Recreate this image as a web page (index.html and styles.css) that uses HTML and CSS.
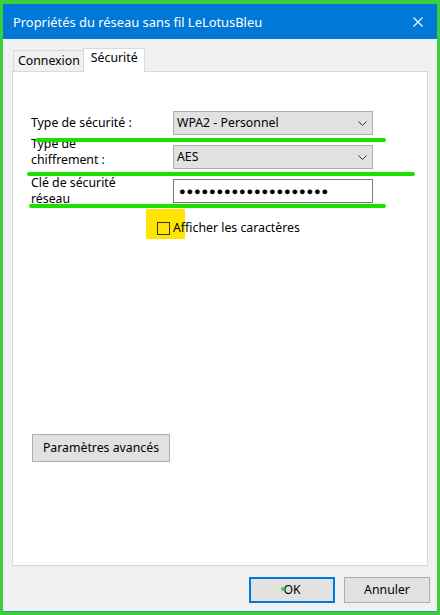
FILE: index.html
```html
<!DOCTYPE html>
<html lang="fr">
<head>
<meta charset="utf-8">
<title>Propriétés du réseau sans fil</title>
<link rel="stylesheet" href="styles.css">
</head>
<body>
<div class="window">
  <div class="titlebar">
    <span class="title">Propriétés du réseau sans fil LeLotusBleu</span>
    <svg class="close" width="10" height="10" viewBox="0 0 10 10"><path d="M0.5 0.5L9.5 9.5M9.5 0.5L0.5 9.5" stroke="#fff" stroke-width="1.1" fill="none"/></svg>
  </div>
  <div class="content">
    <div class="tabs">
      <div class="tab">Connexion</div>
      <div class="tab active">Sécurité</div>
    </div>
    <div class="panel">
      <div class="form">
        <div class="label l1">Type de sécurité :</div>
        <div class="select"><span>WPA2 - Personnel</span><svg width="9" height="5" viewBox="0 0 9 5"><polyline points="0.5,0.5 4.5,4.5 8.5,0.5" fill="none" stroke="#333" stroke-width="1"/></svg></div>
        <div class="label l2">Type de<br>chiffrement :</div>
        <div class="select"><span>AES</span><svg width="9" height="5" viewBox="0 0 9 5"><polyline points="0.5,0.5 4.5,4.5 8.5,0.5" fill="none" stroke="#333" stroke-width="1"/></svg></div>
        <div class="label l3">Clé de sécurité<br>réseau</div>
        <div class="input"><span class="dots">●●●●●●●●●●●●●●●●●●●●</span></div>
      </div>
      <span class="highlight"></span>
      <div class="check-row"><span class="box"></span><span>Afficher les caractères</span></div>
      <button class="btn adv">Paramètres avancés</button>
      <span class="stroke s1"></span>
      <span class="stroke s2"></span>
      <span class="stroke s3"></span>
    </div>
    <div class="actions">
      <button class="btn ok">OK<span class="dot"></span></button>
      <button class="btn cancel">Annuler</button>
    </div>
  </div>
</div>
</body>
</html>
```

FILE: styles.css
```css
html, body {
  margin: 0;
  padding: 0;
}
body {
  font-family: "Noto Sans", "Open Sans", sans-serif;
  font-size: 12.3px;
  line-height: 16px;
  color: #000;
  background: #3ccf3c;
}
.window {
  width: 440px;
  height: 615px;
  box-sizing: border-box;
  border: 3px solid #3ccf3c;
  border-top-width: 4px;
  display: flex;
  flex-direction: column;
}
.titlebar {
  height: 35px;
  flex: none;
  background: #0078d7;
  color: #fff;
  display: flex;
  align-items: center;
  justify-content: space-between;
  padding: 0 14px 0 10px;
}
.title {
  font-size: 12.9px;
}
.close {
  display: block;
}
.content {
  flex: 1;
  background: #f0f0f0;
  border-bottom: 1px solid #1aa39a;
  display: flex;
  flex-direction: column;
  padding: 9px 9px 0 9px;
}
.tabs {
  display: flex;
  align-items: flex-end;
  padding-left: 1px;
}
.tab {
  box-sizing: border-box;
  height: 21px;
  border: 1px solid #d9d9d9;
  border-bottom: none;
  background: #f0f0f0;
  padding: 2px 3px 0 4px;
}
.tab.active {
  height: 24px;
  background: #fff;
  margin-left: -1px;
  margin-bottom: -1px;
  padding: 1px 6px 0 7px;
  position: relative;
  z-index: 1;
}
.panel {
  position: relative;
  box-sizing: border-box;
  height: 495px;
  background: #fff;
  border: 1px solid #d9d9d9;
  padding: 39px 0 0 18px;
  display: flex;
  flex-direction: column;
  align-items: flex-start;
}
.form {
  display: grid;
  grid-template-columns: 142px 200px;
  grid-auto-rows: 24px;
  row-gap: 10px;
}
.label {
  align-self: start;
}
.l1 { margin-top: 4px; }
.l2 { margin-top: -9px; }
.l3 { margin-top: -4px; }
.select {
  box-sizing: border-box;
  background: #e1e1e1;
  border: 1px solid #adadad;
  display: flex;
  align-items: center;
  justify-content: space-between;
  padding: 0 5px 0 3px;
}
.select svg {
  display: block;
}
.input {
  box-sizing: border-box;
  background: #fff;
  border: 1px solid #7a7a7a;
  display: flex;
  align-items: center;
  padding: 0 0 0 5px;
}
.dots {
  font-family: "Liberation Sans", sans-serif;
  font-size: 11px;
  letter-spacing: 0.86px;
  line-height: 12px;
}
.check-row {
  position: relative;
  display: flex;
  align-items: center;
  height: 16px;
  margin: 17px 0 0 126px;
  gap: 3px;
}
.box {
  width: 13px;
  height: 13px;
  box-sizing: border-box;
  border: 1px solid #333;
}
.btn {
  font-family: "Noto Sans", "Open Sans", sans-serif;
  font-size: 12.3px;
  line-height: 16px;
  color: #000;
  background: #e1e1e1;
  border: 1px solid #adadad;
  padding: 0;
  margin: 0;
  box-sizing: border-box;
}
.adv {
  width: 138px;
  height: 28px;
  margin: 198px 0 0 1px;
}
.highlight {
  position: absolute;
  left: 133px;
  top: 137px;
  width: 39px;
  height: 30px;
  background: #ffe500;
}
.stroke {
  position: absolute;
  height: 4px;
  border-radius: 2px;
  background: #1ee000;
}
.s1 { left: 22px; top: 66px; width: 351px; }
.s2 { left: 14px; top: 100px; width: 388px; }
.s3 { left: 16px; top: 132px; width: 357px; }
.actions {
  display: flex;
  justify-content: flex-end;
  gap: 9px;
  margin: 11px -2px 0 0;
}
.actions .btn {
  width: 86px;
  height: 26px;
}
.ok {
  position: relative;
  border: 2px solid #0078d7;
}
.dot {
  position: absolute;
  left: 30px;
  top: 8px;
  width: 4px;
  height: 4px;
  border-radius: 50%;
  background: #3ccf3c;
}
```
